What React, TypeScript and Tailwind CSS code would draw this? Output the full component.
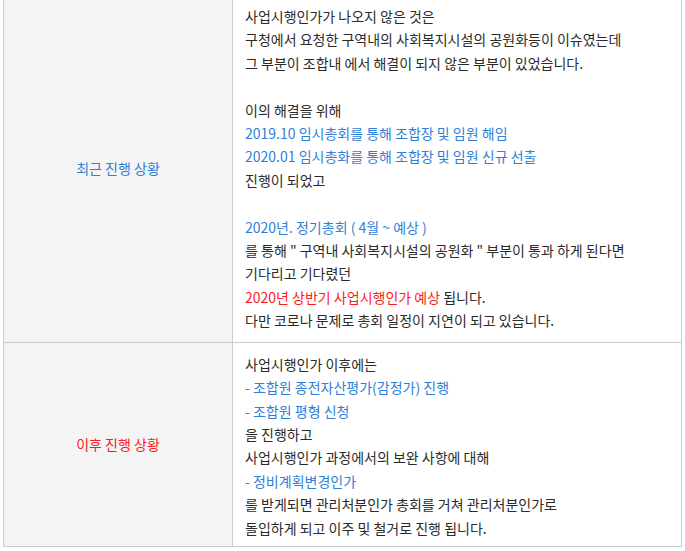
import React from 'react';

type Line = { text: string; tone?: 'blue' | 'red' } | { parts: { text: string; tone?: 'blue' | 'red' }[] } | null;

const toneClass = (tone?: 'blue' | 'red') =>
  tone === 'blue' ? 'text-[#2f7fd8]' : tone === 'red' ? 'text-[#ff1a1a]' : 'text-[#2b2b2b]';

const recent: Line[] = [
  { text: '사업시행인가가 나오지 않은 것은' },
  { text: '구청에서 요청한 구역내의 사회복지시설의 공원화등이 이슈였는데' },
  { text: '그 부분이 조합내 에서 해결이 되지 않은 부분이 있었습니다.' },
  null,
  { text: '이의 해결을 위해' },
  { text: '2019.10 임시총회를 통해 조합장 및 임원 해임', tone: 'blue' },
  { text: '2020.01 임시총화를 통해 조합장 및 임원 신규 선출', tone: 'blue' },
  { text: '진행이 되었고' },
  null,
  { text: '2020년. 정기총회 ( 4월 ~ 예상 )', tone: 'blue' },
  { text: '를 통해 " 구역내 사회복지시설의 공원화 " 부분이 통과 하게 된다면' },
  { text: '기다리고 기다렸던' },
  { parts: [{ text: '2020년 상반기 사업시행인가 예상', tone: 'red' }, { text: ' 됩니다.' }] },
  { text: '다만 코로나 문제로 총회 일정이 지연이 되고 있습니다.' },
];

const after: Line[] = [
  { text: '사업시행인가 이후에는' },
  { text: '- 조합원 종전자산평가(감정가) 진행', tone: 'blue' },
  { text: '- 조합원 평형 신청', tone: 'blue' },
  { text: '을 진행하고' },
  { text: '사업시행인가 과정에서의 보완 사항에 대해' },
  { text: '- 정비계획변경인가', tone: 'blue' },
  { text: '를 받게되면 관리처분인가 총회를 거쳐 관리처분인가로' },
  { text: '돌입하게 되고 이주 및 철거로 진행 됩니다.' },
];

function Lines({ lines }: { lines: Line[] }) {
  return (
    <div className="text-[14px] leading-[23.4px] whitespace-pre">
      {lines.map((line, i) => {
        if (!line) return <p key={i}>&nbsp;</p>;
        if ('parts' in line)
          return (
            <p key={i}>
              {line.parts.map((p, j) => (
                <span key={j} className={toneClass(p.tone)}>{p.text}</span>
              ))}
            </p>
          );
        return <p key={i} className={toneClass(line.tone)}>{line.text}</p>;
      })}
    </div>
  );
}

function Row({ label, labelTone, lines, pad }: { label: string; labelTone: 'blue' | 'red'; lines: Line[]; pad: string }) {
  return (
    <div className="flex border-b border-[#cccccc] last:border-b-0">
      <div className={`w-[229px] shrink-0 bg-[#f4f4f4] border-r border-[#cccccc] flex items-center justify-center text-[14px] ${toneClass(labelTone)}`}>
        {label}
      </div>
      <div className={`flex-1 bg-white pl-[12px] ${pad}`}>
        <Lines lines={lines} />
      </div>
    </div>
  );
}

export default function App() {
  return (
    <div className="w-[685px] h-[551px] overflow-hidden bg-white" style={{ fontFamily: '"Noto Sans CJK KR", "Noto Sans", sans-serif' }}>
      <div className="-mt-[5px] ml-[3px] w-[679px] border border-[#cccccc]">
        <Row label="최근 진행 상황" labelTone="blue" lines={recent} pad="pt-[9px] pb-[9px]" />
        <Row label="이후 진행 상황" labelTone="red" lines={after} pad="pt-[10px] pb-[6px]" />
      </div>
    </div>
  );
}
